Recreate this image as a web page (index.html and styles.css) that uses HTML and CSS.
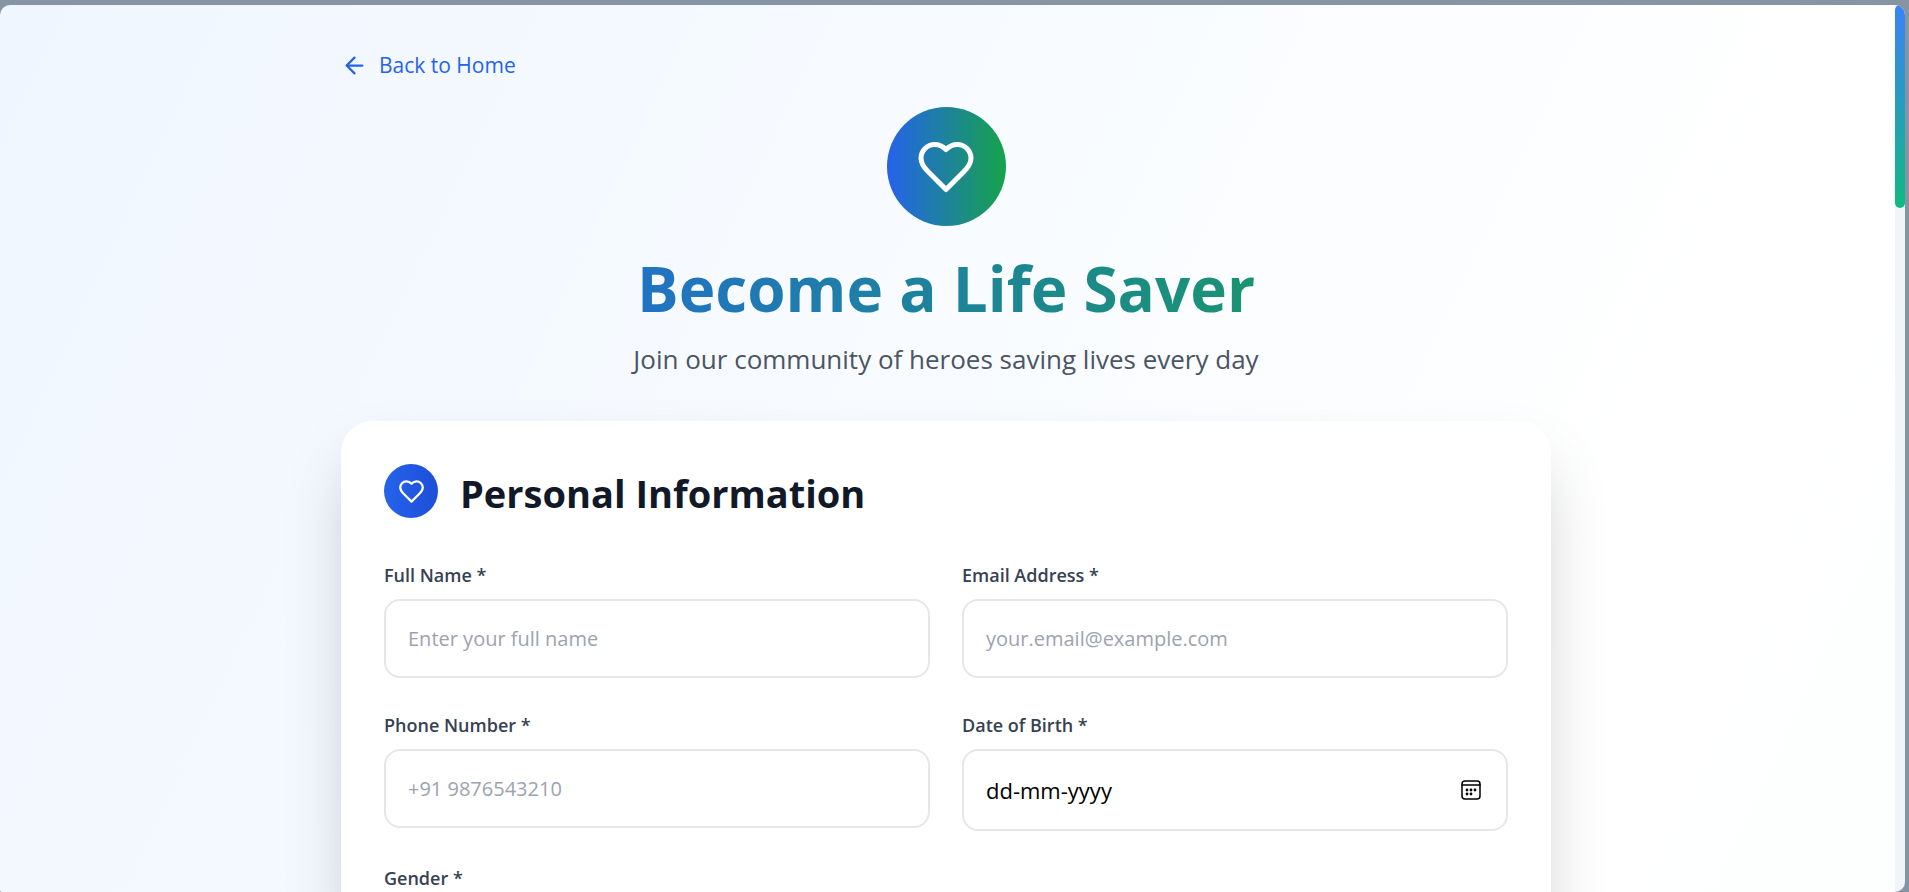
FILE: index.html
```html
<!DOCTYPE html>
<html lang="en">
<head>
  <meta charset="UTF-8" />
  <meta name="viewport" content="width=device-width, initial-scale=1.0"/>
  <title>Become a Life Saver</title>
  <link rel="stylesheet" href="styles.css">
</head>
<body>

  <div class="window">
    <main class="page">
      <div class="container">

        <a href="#" class="back-link">
          <svg class="back-icon" viewBox="0 0 24 24" aria-hidden="true">
            <path d="M12 19l-7-7 7-7M19 12H5"/>
          </svg>
          Back to Home
        </a>

        <header class="hero">
          <div class="hero-icon">
            <svg viewBox="0 0 24 24" aria-hidden="true">
              <path d="M19 14c1.49-1.46 3-3.21 3-5.5A5.5 5.5 0 0 0 16.5 3c-1.76 0-3 .5-4.5 2-1.5-1.5-2.74-2-4.5-2A5.5 5.5 0 0 0 2 8.5c0 2.3 1.5 4.05 3 5.5l7 7Z"/>
            </svg>
          </div>
          <h1 class="hero-title">Become a Life Saver</h1>
          <p class="hero-text">Join our community of heroes saving lives every day</p>
        </header>

        <form class="card">
          <div class="section-header">
            <div class="section-icon">
              <svg viewBox="0 0 24 24" aria-hidden="true">
                <path d="M19 14c1.49-1.46 3-3.21 3-5.5A5.5 5.5 0 0 0 16.5 3c-1.76 0-3 .5-4.5 2-1.5-1.5-2.74-2-4.5-2A5.5 5.5 0 0 0 2 8.5c0 2.3 1.5 4.05 3 5.5l7 7Z"/>
              </svg>
            </div>
            <h2 class="section-title">Personal Information</h2>
          </div>

          <div class="form-grid">
            <div class="field">
              <label for="full-name">Full Name *</label>
              <input type="text" id="full-name" placeholder="Enter your full name">
            </div>
            <div class="field">
              <label for="email">Email Address *</label>
              <input type="email" id="email" placeholder="your.email@example.com">
            </div>
            <div class="field">
              <label for="phone">Phone Number *</label>
              <input type="tel" id="phone" placeholder="+91 9876543210">
            </div>
            <div class="field">
              <label for="dob">Date of Birth *</label>
              <div class="date-box">
                <input type="text" id="dob" placeholder="dd-mm-yyyy">
                <button type="button" class="date-btn" aria-label="Open calendar">
                  <svg viewBox="0 0 20 20" aria-hidden="true">
                    <rect x="1" y="1" width="18" height="18" rx="3"/>
                    <path d="M1 5h18"/>
                    <g class="dots">
                      <circle cx="6" cy="10" r="1.4"/>
                      <circle cx="10" cy="10" r="1.4"/>
                      <circle cx="14" cy="10" r="1.4"/>
                      <circle cx="6" cy="14" r="1.4"/>
                      <circle cx="10" cy="14" r="1.4"/>
                    </g>
                  </svg>
                </button>
              </div>
            </div>
            <div class="field">
              <label for="gender">Gender *</label>
              <select id="gender">
                <option>Select gender</option>
                <option>Male</option>
                <option>Female</option>
                <option>Other</option>
              </select>
            </div>
          </div>
        </form>

      </div>
    </main>

    <div class="scrollbar">
      <div class="scrollbar-thumb"></div>
    </div>
  </div>

</body>
</html>
```
FILE: styles.css
```css
* {
  box-sizing: border-box;
  margin: 0;
  padding: 0;
}

body {
  font-family: 'Open Sans', 'Noto Sans', sans-serif;
  background-color: #8694a3;
  height: 100vh;
  padding: 5px 4px 0 0;
  overflow: hidden;
}

/* WINDOW */
.window {
  display: flex;
  height: 100%;
  border-radius: 10px 10px 10px 2px;
  overflow: hidden;
}

.page {
  flex: 1;
  overflow: hidden;
  padding: 40px 19px 0 16px;
  background: linear-gradient(115deg, #eff6ff, #ffffff 82%, #fcfffd);
}

.scrollbar {
  width: 10px;
  background-color: #f1f5f9;
}

.scrollbar-thumb {
  height: 203px;
  border-radius: 5px;
  background: linear-gradient(to bottom, #3b82f6, #10b981);
}

.container {
  max-width: 1210px;
  margin: 0 auto;
}

/* HERO */
.back-link {
  display: inline-flex;
  align-items: center;
  gap: 11px;
  color: #2563eb;
  font-size: 21px;
  line-height: 40px;
  text-decoration: none;
}

.back-link:hover {
  color: #1d4ed8;
}

svg {
  display: block;
  fill: none;
  stroke: currentColor;
  stroke-width: 2;
  stroke-linecap: round;
  stroke-linejoin: round;
}

.back-icon {
  width: 27px;
  height: 27px;
}

.hero {
  display: flex;
  flex-direction: column;
  align-items: center;
  margin-top: 22px;
  margin-bottom: 42px;
  text-align: center;
}

.hero-icon {
  display: flex;
  align-items: center;
  justify-content: center;
  width: 119px;
  height: 119px;
  border-radius: 50%;
  background: linear-gradient(to right, #2563eb, #16a34a);
  color: white;
}

.hero-icon svg {
  width: 60px;
  height: 60px;
}

.hero-title {
  width: 100%;
  margin-top: 22px;
  font-size: 62px;
  line-height: 80px;
  font-weight: 700;
  color: transparent;
  background: linear-gradient(to right, #2563eb, #16a34a);
  -webkit-background-clip: text;
  background-clip: text;
}

.hero-text {
  margin-top: 11px;
  font-size: 26px;
  line-height: 40px;
  color: #4b5563;
}

/* FORM CARD */
.card {
  background-color: white;
  border-radius: 32px;
  padding: 43px;
  box-shadow: 0 34px 68px -16px rgba(0, 0, 0, 0.25);
}

.section-header {
  display: flex;
  align-items: flex-start;
  gap: 22px;
  margin-bottom: 40px;
}

.section-icon {
  display: flex;
  align-items: center;
  justify-content: center;
  width: 54px;
  height: 54px;
  border-radius: 50%;
  background: linear-gradient(to right, #2563eb, #1d4ed8);
  color: white;
}

.section-icon svg {
  width: 27px;
  height: 27px;
}

.section-title {
  font-size: 38px;
  line-height: 58px;
  font-weight: 700;
  color: #111827;
}

.form-grid {
  display: grid;
  grid-template-columns: 1fr 1fr;
  gap: 34px 32px;
}

.field label {
  display: block;
  margin-bottom: 10px;
  font-size: 18px;
  line-height: 27px;
  font-weight: 600;
  color: #374151;
}

.field input,
.field select {
  display: block;
  width: 100%;
  height: 79px;
  padding: 0 22px;
  border: 2px solid #e5e7eb;
  border-radius: 16px;
  background-color: white;
  font-family: inherit;
  font-size: 20px;
  color: #111827;
}

.field input::placeholder {
  color: #9ca3af;
  opacity: 1;
}

.field input:focus,
.field select:focus {
  outline: none;
  border-color: #2563eb;
}

.date-box {
  position: relative;
}

.field .date-box input {
  height: 82px;
  font-size: 22px;
}

.field .date-box input::placeholder {
  color: black;
}

/* sits over the right end of the date input */
.date-btn {
  position: absolute;
  top: 50%;
  right: 27px;
  transform: translateY(-50%);
  background: none;
  border: none;
  color: black;
  cursor: pointer;
}

.date-btn svg {
  width: 20px;
  height: 20px;
  stroke-width: 1.5;
}

.date-btn .dots {
  fill: currentColor;
  stroke: none;
}

@media (max-width: 768px) {
  .form-grid {
    grid-template-columns: 1fr;
  }

  .hero-title {
    font-size: 40px;
    line-height: 54px;
  }
}
```
